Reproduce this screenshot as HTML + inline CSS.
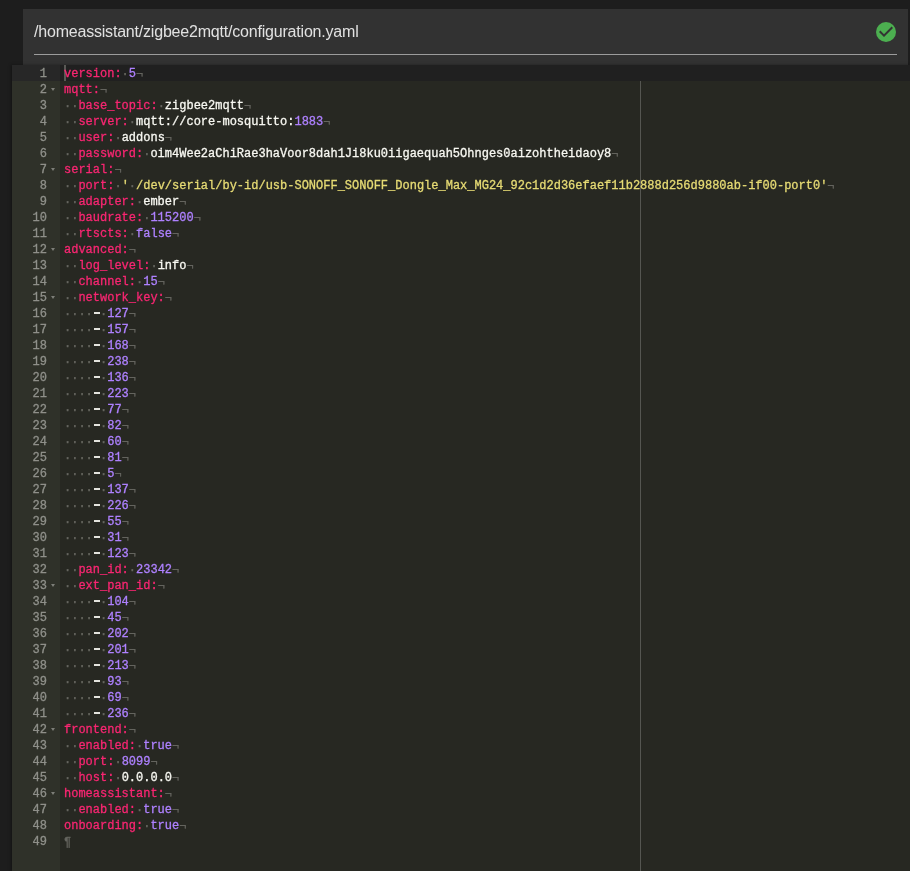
<!DOCTYPE html>
<html><head><meta charset="utf-8">
<style>
html,body{margin:0;padding:0;}
body{width:910px;height:871px;background:#1d1d1d;position:relative;overflow:hidden;}
.card{position:absolute;left:23px;top:9px;width:885px;height:56px;background:#323232;}
.title{will-change:transform;position:absolute;left:34px;top:23px;font-family:"Liberation Sans",sans-serif;font-size:16px;letter-spacing:-0.2px;color:#e1e1e1;white-space:nowrap;}
.uline{position:absolute;left:34px;top:54px;width:863px;height:1px;background:#9c9c9c;}
.ok{position:absolute;left:874px;top:20px;width:24px;height:24px;}
.ed{position:absolute;left:12px;top:65px;width:898px;height:806px;background:#272822;box-shadow:-1px 0 3px rgba(0,0,0,0.35);}
.gut{will-change:transform;position:absolute;left:0;top:0;width:48px;height:806px;background:#2f3129;color:#8f908a;font-family:"Liberation Mono",monospace;font-size:12px;}
.g{position:relative;box-sizing:border-box;padding-top:1px;height:16px;line-height:16px;-webkit-text-stroke:0.3px;text-align:right;padding-right:13px;}
.g.a{background:#272727;}
.g u{position:absolute;left:38.8px;top:7px;width:0;height:0;border-left:2.7px solid transparent;border-right:2.7px solid transparent;border-top:3.2px solid #7d7e78;}
.act{position:absolute;left:48px;top:0;width:850px;height:16px;background:#202020;}
.pm{position:absolute;left:628px;top:0;width:1px;height:806px;background:#555651;}
.code{will-change:transform;position:absolute;left:52px;top:1px;-webkit-text-stroke:0.3px;font-family:"Liberation Mono",monospace;font-size:12px;color:#f8f8f2;white-space:pre;}
.l{height:16px;line-height:16px;}
.l i{font-style:normal;color:#65655f;position:relative;top:0.5px;}
.l b{font-weight:normal;}
.k{color:#f92672;}
.n{color:#ae81ff;}
.q{color:#e6db74;}
.t{color:#f8f8f2;}
.d{position:relative;color:transparent;}
.d::after{content:"";position:absolute;left:0.9px;width:5.8px;top:5px;height:2px;background:#e4e4de;}
.cur{position:absolute;left:52px;top:0;width:2px;height:16px;background:#595955;}
</style></head><body>
<div class="card"></div>
<div class="title">/homeassistant/zigbee2mqtt/configuration.yaml</div>
<div class="uline"></div>
<svg class="ok" viewBox="0 0 24 24"><circle cx="12" cy="12" r="10" fill="#4caf50"/><path d="M10 17L5 12L6.41 10.59L10 14.17L17.59 6.58L19 8L10 17Z" fill="#333333"/></svg>
<div class="ed">
<div class="gut">
<div class="g a">1</div>
<div class="g">2<u></u></div>
<div class="g">3</div>
<div class="g">4</div>
<div class="g">5</div>
<div class="g">6</div>
<div class="g">7<u></u></div>
<div class="g">8</div>
<div class="g">9</div>
<div class="g">10</div>
<div class="g">11</div>
<div class="g">12<u></u></div>
<div class="g">13</div>
<div class="g">14</div>
<div class="g">15<u></u></div>
<div class="g">16</div>
<div class="g">17</div>
<div class="g">18</div>
<div class="g">19</div>
<div class="g">20</div>
<div class="g">21</div>
<div class="g">22</div>
<div class="g">23</div>
<div class="g">24</div>
<div class="g">25</div>
<div class="g">26</div>
<div class="g">27</div>
<div class="g">28</div>
<div class="g">29</div>
<div class="g">30</div>
<div class="g">31</div>
<div class="g">32</div>
<div class="g">33<u></u></div>
<div class="g">34</div>
<div class="g">35</div>
<div class="g">36</div>
<div class="g">37</div>
<div class="g">38</div>
<div class="g">39</div>
<div class="g">40</div>
<div class="g">41</div>
<div class="g">42<u></u></div>
<div class="g">43</div>
<div class="g">44</div>
<div class="g">45</div>
<div class="g">46<u></u></div>
<div class="g">47</div>
<div class="g">48</div>
<div class="g">49</div>
</div>
<div class="pm"></div>
<div class="act"></div>
<div class="cur"></div>
<div class="code"><div class="l"><b class="k">version:</b><i>·</i><b class="n">5</b><i>¬</i></div><div class="l"><b class="k">mqtt:</b><i>¬</i></div><div class="l"><i>··</i><b class="k">base_topic:</b><i>·</i><b class="t">zigbee2mqtt</b><i>¬</i></div><div class="l"><i>··</i><b class="k">server:</b><i>·</i><b class="t">mqtt://core-mosquitto:</b><b class="n">1883</b><i>¬</i></div><div class="l"><i>··</i><b class="k">user:</b><i>·</i><b class="t">addons</b><i>¬</i></div><div class="l"><i>··</i><b class="k">password:</b><i>·</i><b class="t">oim4Wee2aChiRae3haVoor8dah1Ji8ku0iigaequah5Ohnges0aizohtheidaoy8</b><i>¬</i></div><div class="l"><b class="k">serial:</b><i>¬</i></div><div class="l"><i>··</i><b class="k">port:</b><i>·</i><b class="q">&#x27;</b><i>·</i><b class="q">/dev/serial/by-id/usb-SONOFF_SONOFF_Dongle_Max_MG24_92c1d2d36efaef11b2888d256d9880ab-if00-port0&#x27;</b><i>¬</i></div><div class="l"><i>··</i><b class="k">adapter:</b><i>·</i><b class="t">ember</b><i>¬</i></div><div class="l"><i>··</i><b class="k">baudrate:</b><i>·</i><b class="n">115200</b><i>¬</i></div><div class="l"><i>··</i><b class="k">rtscts:</b><i>·</i><b class="n">false</b><i>¬</i></div><div class="l"><b class="k">advanced:</b><i>¬</i></div><div class="l"><i>··</i><b class="k">log_level:</b><i>·</i><b class="t">info</b><i>¬</i></div><div class="l"><i>··</i><b class="k">channel:</b><i>·</i><b class="n">15</b><i>¬</i></div><div class="l"><i>··</i><b class="k">network_key:</b><i>¬</i></div><div class="l"><i>····</i><b class="d">-</b><i>·</i><b class="n">127</b><i>¬</i></div><div class="l"><i>····</i><b class="d">-</b><i>·</i><b class="n">157</b><i>¬</i></div><div class="l"><i>····</i><b class="d">-</b><i>·</i><b class="n">168</b><i>¬</i></div><div class="l"><i>····</i><b class="d">-</b><i>·</i><b class="n">238</b><i>¬</i></div><div class="l"><i>····</i><b class="d">-</b><i>·</i><b class="n">136</b><i>¬</i></div><div class="l"><i>····</i><b class="d">-</b><i>·</i><b class="n">223</b><i>¬</i></div><div class="l"><i>····</i><b class="d">-</b><i>·</i><b class="n">77</b><i>¬</i></div><div class="l"><i>····</i><b class="d">-</b><i>·</i><b class="n">82</b><i>¬</i></div><div class="l"><i>····</i><b class="d">-</b><i>·</i><b class="n">60</b><i>¬</i></div><div class="l"><i>····</i><b class="d">-</b><i>·</i><b class="n">81</b><i>¬</i></div><div class="l"><i>····</i><b class="d">-</b><i>·</i><b class="n">5</b><i>¬</i></div><div class="l"><i>····</i><b class="d">-</b><i>·</i><b class="n">137</b><i>¬</i></div><div class="l"><i>····</i><b class="d">-</b><i>·</i><b class="n">226</b><i>¬</i></div><div class="l"><i>····</i><b class="d">-</b><i>·</i><b class="n">55</b><i>¬</i></div><div class="l"><i>····</i><b class="d">-</b><i>·</i><b class="n">31</b><i>¬</i></div><div class="l"><i>····</i><b class="d">-</b><i>·</i><b class="n">123</b><i>¬</i></div><div class="l"><i>··</i><b class="k">pan_id:</b><i>·</i><b class="n">23342</b><i>¬</i></div><div class="l"><i>··</i><b class="k">ext_pan_id:</b><i>¬</i></div><div class="l"><i>····</i><b class="d">-</b><i>·</i><b class="n">104</b><i>¬</i></div><div class="l"><i>····</i><b class="d">-</b><i>·</i><b class="n">45</b><i>¬</i></div><div class="l"><i>····</i><b class="d">-</b><i>·</i><b class="n">202</b><i>¬</i></div><div class="l"><i>····</i><b class="d">-</b><i>·</i><b class="n">201</b><i>¬</i></div><div class="l"><i>····</i><b class="d">-</b><i>·</i><b class="n">213</b><i>¬</i></div><div class="l"><i>····</i><b class="d">-</b><i>·</i><b class="n">93</b><i>¬</i></div><div class="l"><i>····</i><b class="d">-</b><i>·</i><b class="n">69</b><i>¬</i></div><div class="l"><i>····</i><b class="d">-</b><i>·</i><b class="n">236</b><i>¬</i></div><div class="l"><b class="k">frontend:</b><i>¬</i></div><div class="l"><i>··</i><b class="k">enabled:</b><i>·</i><b class="n">true</b><i>¬</i></div><div class="l"><i>··</i><b class="k">port:</b><i>·</i><b class="n">8099</b><i>¬</i></div><div class="l"><i>··</i><b class="k">host:</b><i>·</i><b class="t">0.0.0.0</b><i>¬</i></div><div class="l"><b class="k">homeassistant:</b><i>¬</i></div><div class="l"><i>··</i><b class="k">enabled:</b><i>·</i><b class="n">true</b><i>¬</i></div><div class="l"><b class="k">onboarding:</b><i>·</i><b class="n">true</b><i>¬</i></div><div class="l"><i>¶</i></div></div>
</div>
</body></html>
